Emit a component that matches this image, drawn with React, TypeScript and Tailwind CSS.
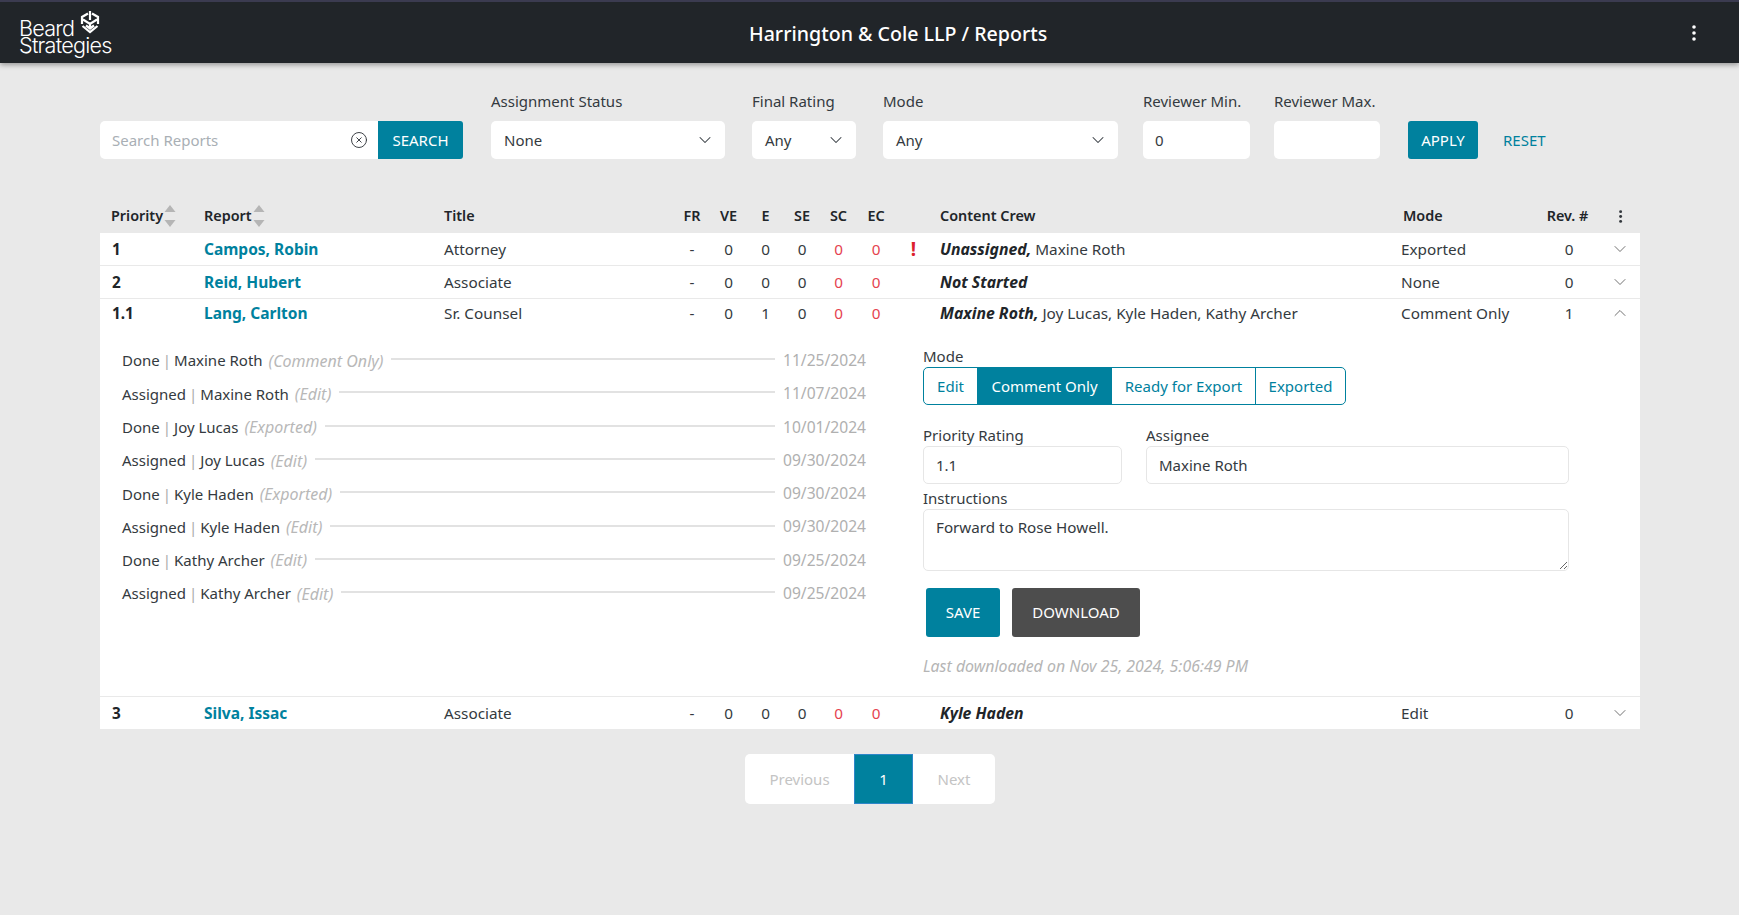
import { ChevronDown, ChevronUp, CircleX } from "lucide-react"

const font = "font-['Noto_Sans',sans-serif]"
const rowGrid = "grid grid-cols-[104px_240px_230px_36px_37px_37px_36px_37px_38px_37px_469px_139px_55px_45px] items-center"

function Logo() {
  return (
    <div className="relative shrink-0 w-[100px] h-[48px] ml-[19px] text-white font-['Inter',sans-serif] font-light text-[21.6px] leading-[17px] tracking-[-0.75px]">
      <div className="pt-[11px]">Beard</div>
      <div>Strategies</div>
      <svg className="absolute left-[60px] top-[1px]" width="22" height="25" viewBox="0 0 22 25" fill="none" stroke="#fff" strokeWidth="2.2">
        <path d="M9 3.5 3 7v7M13 3.5 19 7v7M11 1v9M4 9.5l7 4.5 7-4.5M3.5 16 11 22l7.5-6M7 15.5l4 3 4-3M11 14v4" />
      </svg>
    </div>
  )
}

function Kebab({ className, h = 16 }: { className: string; h?: number }) {
  return (
    <svg className={className} width={h / 4} height={h} viewBox="0 0 4 16" fill="currentColor">
      <circle cx="2" cy="2" r="1.8" />
      <circle cx="2" cy="8" r="1.8" />
      <circle cx="2" cy="14" r="1.8" />
    </svg>
  )
}

function Label({ children }: { children: React.ReactNode }) {
  return <div className="text-[15px] leading-[20px] h-[30px] text-[#343a40]">{children}</div>
}

function SelectBox({ label, value, width, ml }: { label: string; value: string; width: string; ml: string }) {
  return (
    <div className={`${width} ${ml}`}>
      <Label>{label}</Label>
      <div className="h-[38px] bg-white rounded-[5px] flex items-center justify-between pl-[13px] pr-[10px] text-[15px] text-[#343a40]">
        <span>{value}</span>
        <ChevronDown size={20} strokeWidth={1.25} />
      </div>
    </div>
  )
}

function SortArrows({ className }: { className: string }) {
  return (
    <svg className={className} width="12" height="24" viewBox="0 0 12 24" fill="#b5b5b5">
      <path d="M6 1 11.5 8H.5Z" />
      <path d="M6 23 11.5 16H.5Z" />
    </svg>
  )
}

type Row = {
  pri: string
  name: string
  title: string
  e: string
  flag?: boolean
  lead: string
  rest?: string
  mode: string
  rev: string
  open?: boolean
}

function ReportRow({ r }: { r: Row }) {
  const num = "text-center"
  return (
    <div className={`${rowGrid} ${r.open ? "h-[28px]" : "h-[32px]"} text-[15.3px] text-[#343a40]`}>
      <div className="pl-[12px] font-bold text-[#212529]">{r.pri}</div>
      <a className="pt-[2px] font-bold text-[15.5px] text-[#00819e]">{r.name}</a>
      <div>{r.title}</div>
      <div className={num}>-</div>
      <div className={num}>0</div>
      <div className={num}>{r.e}</div>
      <div className={num}>0</div>
      <div className={`${num} text-[#e5424f]`}>0</div>
      <div className={`${num} text-[#e5424f]`}>0</div>
      <div className="text-center font-bold text-[19px] leading-none text-[#dc1f2e]">{r.flag ? "!" : ""}</div>
      <div className="pl-[8px] pt-[2px]">
        <span className="font-bold italic text-[15.8px] text-[#212529]">{r.lead}</span>
        {r.rest ? ` ${r.rest}` : ""}
      </div>
      <div>{r.mode}</div>
      <div className="text-center pl-[3px]">{r.rev}</div>
      <div className="flex justify-center pl-[5px] text-[#555]">
        {r.open ? <ChevronUp size={20} strokeWidth={1} /> : <ChevronDown size={20} strokeWidth={1} />}
      </div>
    </div>
  )
}

const history = [
  ["Done", "Maxine Roth", "Comment Only", "11/25/2024"],
  ["Assigned", "Maxine Roth", "Edit", "11/07/2024"],
  ["Done", "Joy Lucas", "Exported", "10/01/2024"],
  ["Assigned", "Joy Lucas", "Edit", "09/30/2024"],
  ["Done", "Kyle Haden", "Exported", "09/30/2024"],
  ["Assigned", "Kyle Haden", "Edit", "09/30/2024"],
  ["Done", "Kathy Archer", "Edit", "09/25/2024"],
  ["Assigned", "Kathy Archer", "Edit", "09/25/2024"],
]

const modes = ["Edit", "Comment Only", "Ready for Export", "Exported"]

function Detail() {
  return (
    <div className="h-[369px] flex text-[15px] text-[#343a40]">
      <div className="w-[823px] pl-[22px] pr-[57px] pt-[17px]">
        {history.map((h, i) => (
          <div key={i} className="h-[33.3px] flex items-center">
            <span>{h[0]}</span>
            <span className="mx-[3px] text-[#aaa]">|</span>
            <span>{h[1]}</span>
            <span className="ml-[6px] italic text-[16px] text-[#b8b8b8]">({h[2]})</span>
            <div className="flex-1 h-[2px] bg-[#e2e2e2] mx-[8px] mb-[3px]" />
            <span className="text-[15.6px] text-[#b0b0b0]">{h[3]}</span>
          </div>
        ))}
      </div>
      <div className="w-[646px] pt-[15px]">
        <div className="leading-[20px] h-[25px] pt-[4px] box-border">Mode</div>
        <div className="flex h-[38px] w-[423px] border border-[#00819e] rounded-[5px] overflow-hidden text-[#00819e]">
          {modes.map((m, i) => (
            <div
              key={m}
              className={`flex items-center justify-center ${
                i === 0 ? "w-[53px]" : i === 1 ? "w-[135px] bg-[#00819e] text-white" : i === 2 ? "w-[144px] border-r border-[#00819e]" : "flex-1"
              }`}
            >
              {m}
            </div>
          ))}
        </div>
        <div className="flex gap-[24px] mt-[20px]">
          <div className="w-[199px]">
            <div className="leading-[20px] h-[21px]">Priority Rating</div>
            <input readOnly value="1.1" className="w-full h-[38px] bg-white border border-[#e6e6e6] rounded-[5px] px-[12px] outline-none" />
          </div>
          <div className="w-[423px]">
            <div className="leading-[20px] h-[21px]">Assignee</div>
            <input readOnly value="Maxine Roth" className="w-full h-[38px] bg-white border border-[#e6e6e6] rounded-[5px] px-[12px] outline-none" />
          </div>
        </div>
        <div className="leading-[20px] h-[25px] pt-[4px]">Instructions</div>
        <textarea readOnly value="Forward to Rose Howell." className="block w-full h-[62px] border border-[#e6e6e6] rounded-[5px] px-[12px] py-[6px] text-[15.2px] outline-none" />
        <div className="flex gap-[12px] ml-[3px] mt-[17px] text-white">
          <button className="w-[74px] h-[49px] bg-[#00819e] rounded-[3px]">SAVE</button>
          <button className="w-[128px] h-[49px] bg-[#4d4d4d] rounded-[3px]">DOWNLOAD</button>
        </div>
        <div className="mt-[18px] italic text-[15.9px] text-[#b5b5b5]">Last downloaded on Nov 25, 2024, 5:06:49 PM</div>
      </div>
    </div>
  )
}

export default function App() {
  return (
    <div className={`${font} min-h-[915px] bg-[#e9e9e9]`}>
      <header className="h-[63px] bg-[#212529] border-t-2 border-[#3b3b50] flex items-center shadow-[0_2px_5px_rgba(0,0,0,0.35)]">
        <Logo />
        <div className="ml-[630px] pt-[2px] text-white text-[19.6px] font-medium">Harrington &amp; Cole LLP / Reports</div>
        <Kebab className="ml-auto text-white mr-[43px]" />
      </header>

      <main className="pl-[100px] pr-[99px] pt-[26px]">
        <div className="flex items-end h-[70px]">
          <div className="flex w-[363px] h-[38px]">
            <div className="relative flex-1 bg-white rounded-l-[5px] flex items-center pl-[12px] text-[15px] text-[#a9afb5]">
              Search Reports
              <CircleX size={18} strokeWidth={1.25} className="absolute right-[10px] text-[#33383d]" />
            </div>
            <button className="w-[85px] bg-[#00819e] text-white text-[15px] rounded-r-[3px]">SEARCH</button>
          </div>
          <SelectBox label="Assignment Status" value="None" width="w-[234px]" ml="ml-[28px]" />
          <SelectBox label="Final Rating" value="Any" width="w-[104px]" ml="ml-[27px]" />
          <SelectBox label="Mode" value="Any" width="w-[235px]" ml="ml-[27px]" />
          <div className="w-[107px] ml-[25px]">
            <Label>Reviewer Min.</Label>
            <input readOnly value="0" className="w-full h-[38px] bg-white rounded-[5px] px-[12px] text-[15px] text-[#343a40] outline-none" />
          </div>
          <div className="w-[106px] ml-[24px]">
            <Label>Reviewer Max.</Label>
            <input readOnly value="" className="w-full h-[38px] bg-white rounded-[5px] outline-none" />
          </div>
          <button className="w-[70px] h-[38px] ml-[28px] bg-[#00819e] text-white text-[15px] rounded-[3px]">APPLY</button>
          <button className="ml-[25px] h-[38px] text-[#00819e] text-[15px]">RESET</button>
        </div>

        <div className={`${rowGrid} h-[74px] pt-[40px] text-[14.4px] font-semibold text-[#212529]`}>
          <div className="pl-[11px] flex items-center">Priority<SortArrows className="ml-[1px]" /></div>
          <div className="flex items-center">Report<SortArrows className="ml-[1px]" /></div>
          <div>Title</div>
          <div className="text-center">FR</div>
          <div className="text-center">VE</div>
          <div className="text-center">E</div>
          <div className="text-center">SE</div>
          <div className="text-center">SC</div>
          <div className="text-center">EC</div>
          <div />
          <div className="pl-[8px]">Content Crew</div>
          <div className="pl-[2px]">Mode</div>
          <div className="text-center whitespace-nowrap">Rev. #</div>
          <div className="flex justify-center pl-[7px]"><Kebab h={13} className="text-[#33383d]" /></div>
        </div>

        <div className="flex flex-col gap-[1px]">
          <div className="bg-white">
            <ReportRow r={{ pri: "1", name: "Campos, Robin", title: "Attorney", e: "0", flag: true, lead: "Unassigned,", rest: "Maxine Roth", mode: "Exported", rev: "0" }} />
          </div>
          <div className="bg-white">
            <ReportRow r={{ pri: "2", name: "Reid, Hubert", title: "Associate", e: "0", lead: "Not Started", mode: "None", rev: "0" }} />
          </div>
          <div className="bg-white">
            <ReportRow r={{ pri: "1.1", name: "Lang, Carlton", title: "Sr. Counsel", e: "1", lead: "Maxine Roth,", rest: "Joy Lucas, Kyle Haden, Kathy Archer", mode: "Comment Only", rev: "1", open: true }} />
            <Detail />
          </div>
          <div className="bg-white">
            <ReportRow r={{ pri: "3", name: "Silva, Issac", title: "Associate", e: "0", lead: "Kyle Haden", mode: "Edit", rev: "0" }} />
          </div>
        </div>

        <div className="flex justify-center mt-[25px]">
          <div className="flex h-[50px] bg-white rounded-[5px] text-[15px] text-[#c4c4c4] items-stretch">
            <div className="w-[109px] flex items-center justify-center">Previous</div>
            <div className="w-[59px] flex items-center justify-center bg-[#00819e] text-white border border-[#2e86c9]">1</div>
            <div className="w-[82px] flex items-center justify-center">Next</div>
          </div>
        </div>
      </main>
    </div>
  )
}
